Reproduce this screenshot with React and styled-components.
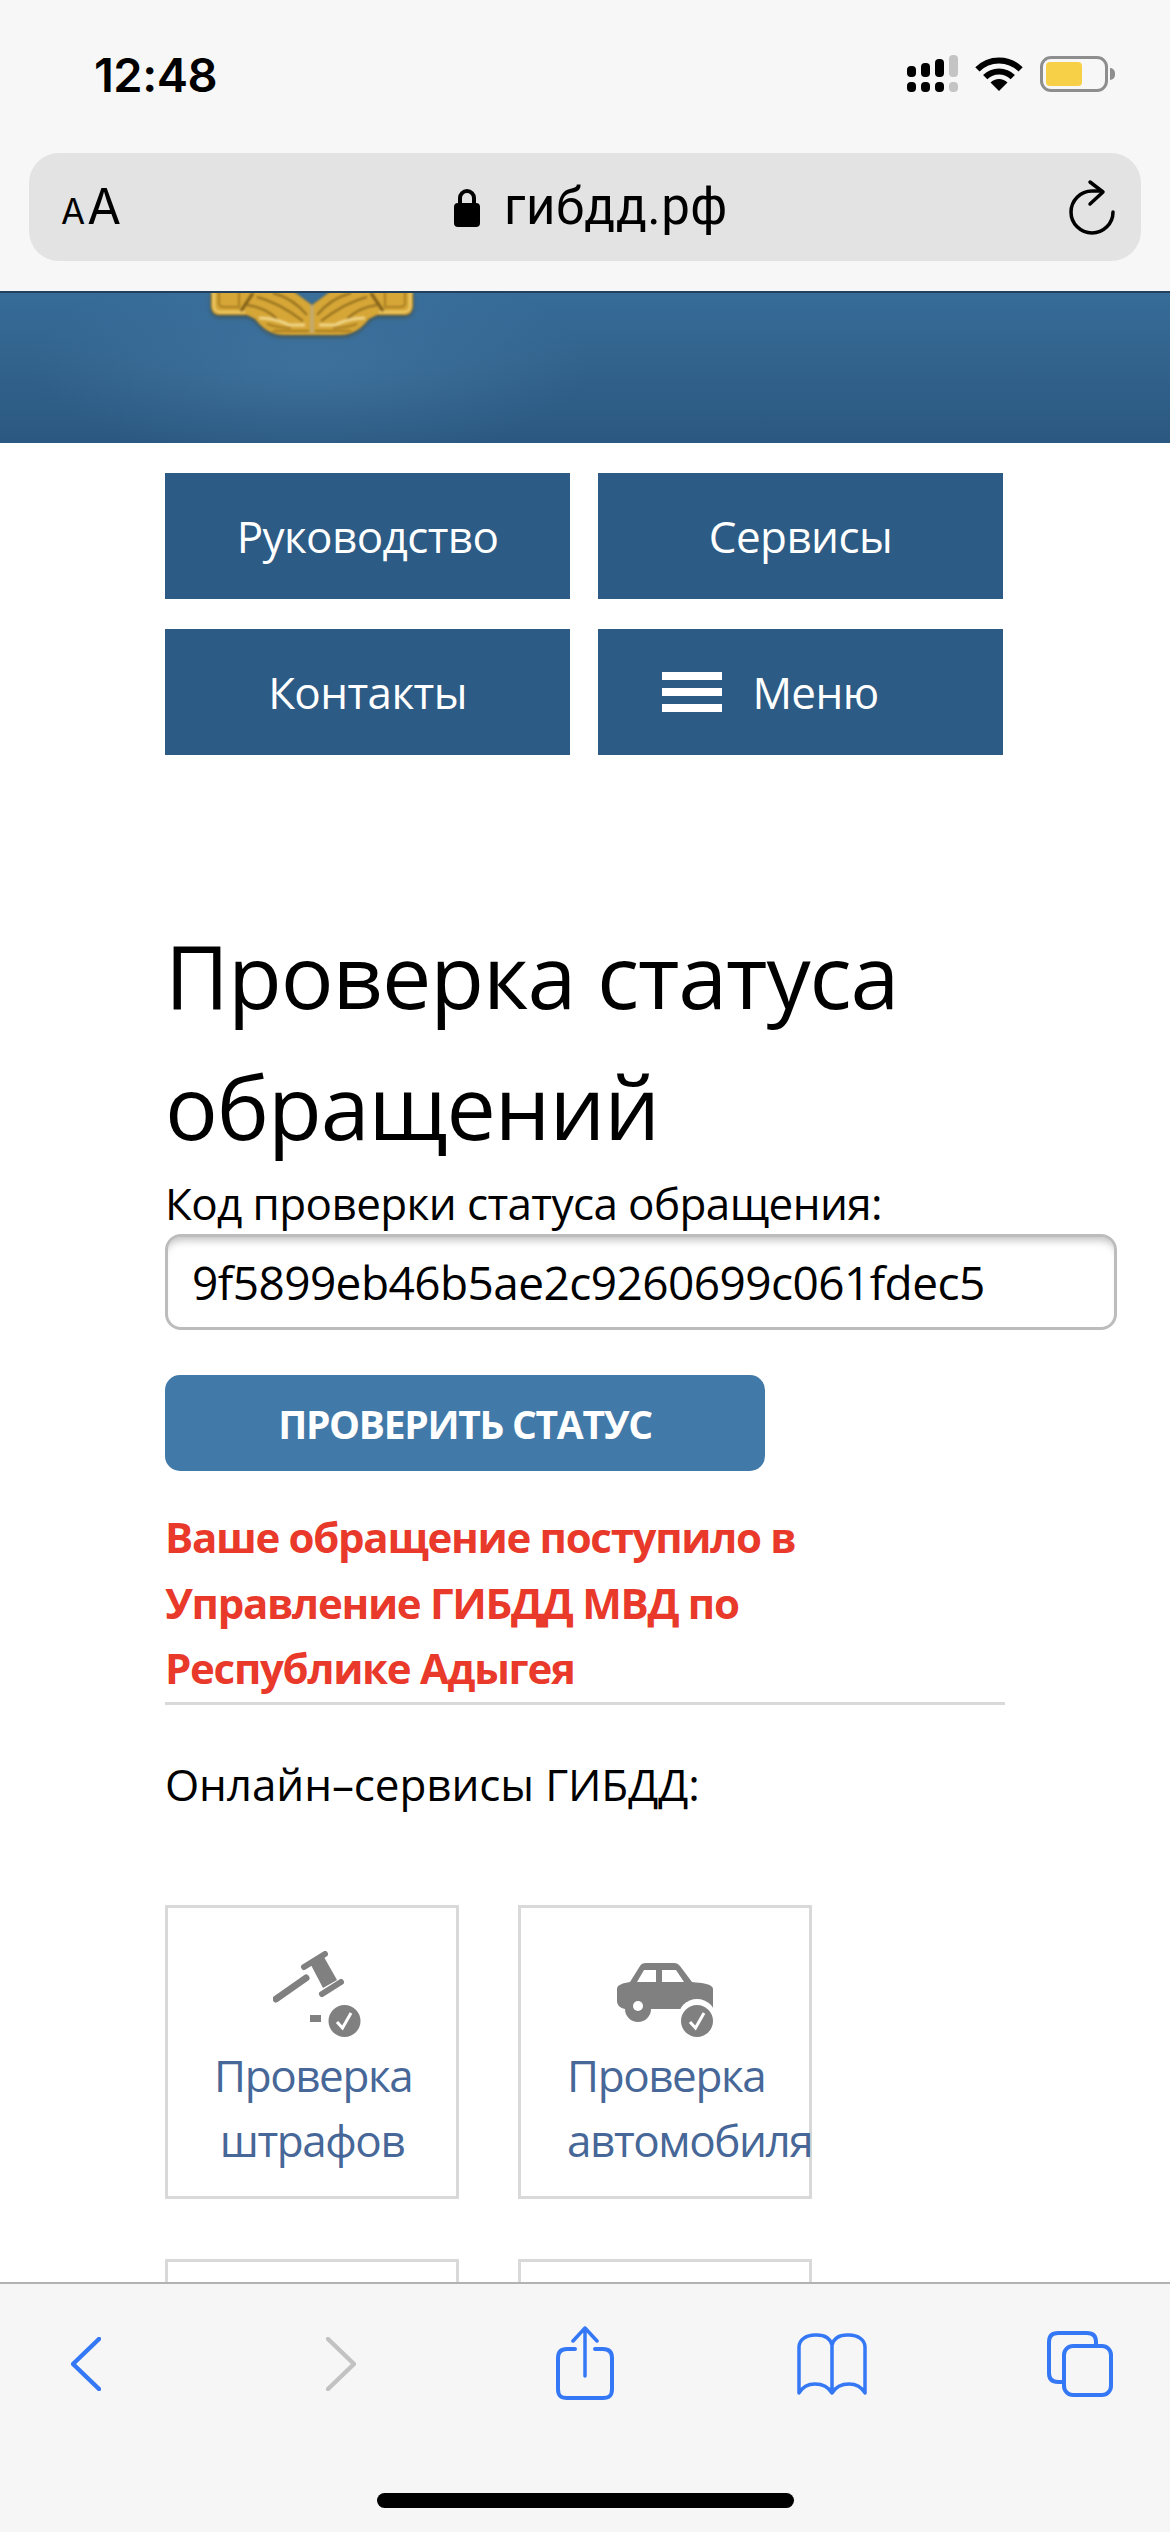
import React from 'react'
import styled, { createGlobalStyle } from 'styled-components'

const GlobalStyle = createGlobalStyle`
  html, body {
    margin: 0;
    padding: 0;
    background: #fff;
  }
  * {
    box-sizing: border-box;
  }
`

const Page = styled.div`
  position: relative;
  width: 1170px;
  height: 2532px;
  overflow: hidden;
  background: #fff;
  color: #000;
  font-family: 'Open Sans', 'Noto Sans', sans-serif;
`

const Chrome = styled.div`
  height: 291px;
  background: #f7f7f7;
  padding: 0 29px;
`

const StatusRow = styled.div`
  height: 153px;
  display: flex;
  align-items: flex-start;
  justify-content: space-between;
  padding: 50px 33px 0 65px;
`

const Clock = styled.div`
  font-family: Inter, sans-serif;
  font-weight: 600;
  font-size: 47px;
  line-height: 50px;
  letter-spacing: -0.5px;
`

const StatusIcons = styled.div`
  display: flex;
  align-items: flex-start;
  margin-top: 5px;
  gap: 17px;
`

const Battery = styled.div`
  position: relative;
  width: 68px;
  height: 36px;
  margin-top: 1px;
  border: 3px solid #8e8e8e;
  border-radius: 11px;
  padding: 3px;
  &::after {
    content: '';
    position: absolute;
    right: -10px;
    top: 9px;
    width: 5px;
    height: 12px;
    background: #8e8e8e;
    border-radius: 0 5px 5px 0;
  }
`

const BatteryLevel = styled.div`
  width: 36px;
  height: 24px;
  background: #f8d048;
  border-radius: 4px;
`

const UrlBar = styled.div`
  position: relative;
  height: 108px;
  background: #e3e3e3;
  border-radius: 30px;
  display: flex;
  align-items: center;
  justify-content: center;
  font-family: Inter, sans-serif;
`

const TextSize = styled.div`
  position: absolute;
  left: 32px;
  top: 26px;
  font-size: 49px;
  line-height: 56px;
  display: flex;
  align-items: baseline;
  gap: 2px;
  small {
    font-size: 35px;
  }
`

const Domain = styled.div`
  display: flex;
  align-items: center;
  gap: 24px;
  margin-left: 12px;
  font-family: Roboto, sans-serif;
  font-size: 51px;
  line-height: 56px;
  letter-spacing: 0.5px;
`

const Reload = styled.svg`
  position: absolute;
  right: 23px;
  top: 26px;
`

const SiteHeader = styled.div`
  position: relative;
  height: 152px;
  overflow: hidden;
  border-top: 2px solid #21405e;
  background:
    radial-gradient(ellipse 280px 100px at 310px 70px, rgba(72, 126, 170, 0.55), rgba(72, 126, 170, 0)),
    linear-gradient(#376c98, #2b5880);
`

const Emblem = styled.svg`
  position: absolute;
  left: 211px;
  top: -2px;
  filter: blur(0.8px) drop-shadow(0 2px 2px rgba(70, 55, 15, 0.55));
`

const Content = styled.div`
  padding: 30px 0 0 165px;
`

const NavGrid = styled.div`
  display: grid;
  grid-template-columns: 405px 405px;
  grid-auto-rows: 126px;
  column-gap: 28px;
  row-gap: 30px;
`

const NavButton = styled.div`
  display: flex;
  align-items: center;
  justify-content: center;
  gap: 30px;
  padding-right: ${({ $withIcon }) => ($withIcon ? 60 : 0)}px;
  background: #2c5b85;
  color: #fff;
  font-size: 44px;
  letter-spacing: -0.6px;
`

const Burger = styled.span`
  display: block;
  width: 60px;
  height: 40px;
  background: linear-gradient(#fff 0 8px, transparent 8px 16px, #fff 16px 24px, transparent 24px 32px, #fff 32px 40px);
`

const Title = styled.h1`
  margin: 155px 0 0;
  font-size: 88px;
  line-height: 131px;
  font-weight: 400;
  width: 900px;
  letter-spacing: -1.1px;
`

const FieldLabel = styled.div`
  font-size: 44px;
  line-height: 62px;
  letter-spacing: -0.6px;
`

const CodeInput = styled.div`
  width: 952px;
  height: 96px;
  border: 3px solid #bcbcbc;
  border-radius: 16px;
  box-shadow: inset 0 9px 8px -6px #bdbdbd;
  padding: 0 24px;
  display: flex;
  align-items: center;
  font-size: 46px;
  letter-spacing: -0.56px;
`

const CheckButton = styled.div`
  width: 600px;
  height: 96px;
  margin-top: 45px;
  background: #417aa9;
  border-radius: 15px;
  color: #fff;
  display: flex;
  align-items: center;
  justify-content: center;
  font-weight: 700;
  font-size: 39px;
  letter-spacing: -1.3px;
`

const Result = styled.div`
  width: 840px;
  margin-top: 33px;
  padding-bottom: 1px;
  border-bottom: 3px solid #d9d9d9;
  color: #e8392a;
  font-weight: 700;
  font-size: 42px;
  line-height: 65.5px;
  letter-spacing: -1.3px;
`

const ServicesLabel = styled.div`
  margin-top: 48px;
  font-size: 44px;
  line-height: 62px;
  letter-spacing: -0.1px;
`

const CardGrid = styled.div`
  display: grid;
  grid-template-columns: 294px 294px;
  grid-auto-rows: 294px;
  column-gap: 59px;
  row-gap: 60px;
  margin-top: 90px;
`

const Card = styled.div`
  border: 3px solid #d9d9d9;
  padding: 39px 46px 0;
  display: flex;
  flex-direction: column;
  align-items: stretch;
`

const CardIcon = styled.div`
  height: 90px;
  display: flex;
  justify-content: center;
  align-items: flex-end;
  svg {
    filter: blur(0.6px);
    margin-left: ${({ $shift }) => $shift || 0}px;
  }
`

const CardText = styled.div`
  color: #466797;
  font-size: 44px;
  line-height: 65.5px;
  letter-spacing: -1.4px;
  text-align: center;
  margin-top: 6px;
`

const Toolbar = styled.div`
  position: absolute;
  left: 0;
  right: 0;
  bottom: 0;
  height: 250px;
  background: #f6f6f6;
  border-top: 2px solid #b2b2b2;
  display: flex;
  flex-direction: column;
`

const ToolRow = styled.div`
  display: grid;
  grid-template-columns: 172px 338px 150px 344px 152px;
  grid-template-rows: 160px;
  justify-items: center;
  align-items: center;
`

const HomeIndicator = styled.div`
  align-self: center;
  width: 417px;
  height: 15px;
  margin-top: 49px;
  background: #000;
  border-radius: 8px;
`

const Signal = () => (
  <svg width="51" height="37" viewBox="0 0 51 37">
    <rect x="0" y="11" width="9" height="11" rx="4" />
    <rect x="14" y="8" width="9" height="14" rx="4" />
    <rect x="28" y="4" width="9" height="18" rx="4" />
    <rect x="42" y="0" width="9" height="22" rx="4" fill="#c4c4c4" />
    <rect x="0" y="27" width="9" height="10" rx="4" />
    <rect x="14" y="27" width="9" height="10" rx="4" />
    <rect x="28" y="27" width="9" height="10" rx="4" />
    <rect x="42" y="27" width="9" height="10" rx="4" fill="#c4c4c4" />
  </svg>
)

const Wifi = () => (
  <svg width="48" height="36" viewBox="0 0 48 36">
    <path d="M2.4 14.4A30.5 30.5 0 0 1 45.6 14.4" fill="none" stroke="#000" strokeWidth="6" />
    <path d="M10.2 22.2A19.5 19.5 0 0 1 37.8 22.2" fill="none" stroke="#000" strokeWidth="6" />
    <path d="M24 36L15.5 27.5A12 12 0 0 1 32.5 27.5Z" />
  </svg>
)

const Lock = () => (
  <svg width="26" height="39" viewBox="0 0 26 39">
    <path d="M6 18V10a7 7 0 0 1 14 0v8" fill="none" stroke="#000" strokeWidth="4" />
    <rect x="0" y="15" width="26" height="24" rx="4" />
  </svg>
)

const WreathSide = () => (
  <g>
    <path d="M0 0H82L101 14V44H74C60 44 52 38 44 28L36 24H8C3 24 0 20 0 14Z" fill="#d6a636" />
    <path d="M3 0V15C3 19 6 21 10 21H34" fill="none" stroke="#f0cf70" strokeWidth="2" />
    <path d="M8 0V12C8 15 10 16 13 16H28V0" fill="none" stroke="#a97f22" strokeWidth="2" />
    <path d="M30 20L42 2" stroke="#7d5c17" strokeWidth="3" />
    <path d="M36 14C50 16 60 22 66 28M46 6C62 10 76 18 92 30M62 2C76 6 88 14 96 24" fill="none" stroke="#8f6c1d" strokeWidth="2" />
    <path d="M48 27C60 27 70 30 78 34H94" fill="none" stroke="#f0d68a" strokeWidth="3" />
    <path d="M62 40H98M56 33C64 36 72 37 80 37" fill="none" stroke="#a67c20" strokeWidth="2" />
  </g>
)

const Gavel = () => (
  <svg width="88" height="86" viewBox="0 0 88 86" fill="#808080">
    <path d="M3 48L33 27" stroke="#808080" strokeWidth="7" strokeLinecap="round" />
    <path d="M38 14L51 6L64 29L50 37Z" />
    <path d="M31 16L52 3" stroke="#808080" strokeWidth="6" strokeLinecap="round" />
    <path d="M49 43L68 31" stroke="#808080" strokeWidth="6" strokeLinecap="round" />
    <rect x="37" y="64" width="11" height="7" />
    <circle cx="71.5" cy="70" r="16" />
    <path d="M64 71L69.5 77L78 62" fill="none" stroke="#fff" strokeWidth="3" />
  </svg>
)

const Car = () => (
  <svg width="96" height="74" viewBox="0 0 96 74" fill="#808080">
    <path d="M0 26C0 22 6 20 13 19L23 3C24 1 26 0 29 0H57C60 0 61 1 63 3L75 19C85 20 96 21 96 26V46H34A13 13 0 0 1 8 46C3 45 0 42 0 38Z" />
    <path d="M27 7H39V19H20Z" fill="#fff" />
    <path d="M45 7H59L67 19H45Z" fill="#fff" />
    <circle cx="21" cy="43" r="11" />
    <circle cx="21" cy="43" r="5" fill="#fff" />
    <circle cx="80" cy="55" r="19" fill="#fff" />
    <circle cx="80" cy="58" r="16" />
    <path d="M73 59L78.5 65L87 50" fill="none" stroke="#fff" strokeWidth="3" />
  </svg>
)

const toolStroke = { fill: 'none', stroke: '#3478f6', strokeWidth: 4, strokeLinecap: 'round', strokeLinejoin: 'round' }

const ToolbarIcons = () => (
  <ToolRow>
    <svg width="30" height="54" viewBox="0 0 30 54">
      <path d="M28 2L2 27L28 52" {...toolStroke} strokeWidth="4.5" />
    </svg>
    <svg width="30" height="54" viewBox="0 0 30 54">
      <path d="M2 2L28 27L2 52" {...toolStroke} stroke="#c2c2c2" strokeWidth="4.5" />
    </svg>
    <svg width="58" height="76" viewBox="0 0 58 76">
      <path d="M19 23H11C5 23 2 26 2 32V63C2 70 5 72 11 72H47C53 72 56 70 56 63V32C56 26 53 23 47 23H39" {...toolStroke} />
      <path d="M29 50V2M17 15L29 2L41 15" {...toolStroke} strokeWidth="3.5" />
    </svg>
    <svg width="70" height="62" viewBox="0 0 70 62">
      <path d="M35 12C33 5 27 2 20 2H18C9 2 2 7 2 14V60C6 53 12 51 18 51C26 51 32 55 35 60C38 55 44 51 52 51C58 51 64 53 68 60V14C68 7 61 2 52 2H50C43 2 37 5 35 12V60" {...toolStroke} strokeWidth="3.5" />
    </svg>
    <svg width="66" height="66" viewBox="0 0 66 66">
      <path d="M16 51H11C5 51 2 48 2 42V11C2 5 5 2 11 2H40C46 2 49 5 49 11V15" {...toolStroke} />
      <rect x="17" y="15" width="47" height="49" rx="9" {...toolStroke} />
    </svg>
  </ToolRow>
)

const App = () => (
  <Page>
    <GlobalStyle />
    <Chrome>
      <StatusRow>
        <Clock>12:48</Clock>
        <StatusIcons>
          <Signal />
          <Wifi />
          <Battery>
            <BatteryLevel />
          </Battery>
        </StatusIcons>
      </StatusRow>
      <UrlBar>
        <TextSize>
          <small>A</small>A
        </TextSize>
        <Domain>
          <Lock />
          гибдд.рф
        </Domain>
        <Reload width="50" height="56" viewBox="0 0 50 56">
          <path d="M45 33A21 21 0 1 1 24 12H33" fill="none" stroke="#000" strokeWidth="3.5" strokeLinecap="round" />
          <path d="M22 3L35 13L22 25" fill="none" stroke="#000" strokeWidth="3.5" strokeLinecap="round" strokeLinejoin="round" />
        </Reload>
      </UrlBar>
    </Chrome>

    <SiteHeader>
      <Emblem width="202" height="50" viewBox="0 0 202 50">
        <WreathSide />
        <g transform="matrix(-1 0 0 1 202 0)">
          <WreathSide />
        </g>
        <rect x="99" y="14" width="4" height="28" fill="#c4a96a" />
      </Emblem>
    </SiteHeader>

    <Content>
      <NavGrid>
        <NavButton>Руководство</NavButton>
        <NavButton>Сервисы</NavButton>
        <NavButton>Контакты</NavButton>
        <NavButton $withIcon>
          <Burger />
          Меню
        </NavButton>
      </NavGrid>

      <Title>Проверка статуса обращений</Title>
      <FieldLabel>Код проверки статуса обращения:</FieldLabel>
      <CodeInput>9f5899eb46b5ae2c9260699c061fdec5</CodeInput>
      <CheckButton>ПРОВЕРИТЬ СТАТУС</CheckButton>
      <Result>
        Ваше обращение поступило в
        <br />
        Управление ГИБДД МВД по
        <br />
        Республике Адыгея
      </Result>
      <ServicesLabel>Онлайн–сервисы ГИБДД:</ServicesLabel>

      <CardGrid>
        <Card>
          <CardIcon $shift={10}>
            <Gavel />
          </CardIcon>
          <CardText>Проверка штрафов</CardText>
        </Card>
        <Card>
          <CardIcon>
            <Car />
          </CardIcon>
          <CardText>Проверка автомобиля</CardText>
        </Card>
        <Card />
        <Card />
      </CardGrid>
    </Content>

    <Toolbar>
      <ToolbarIcons />
      <HomeIndicator />
    </Toolbar>
  </Page>
)

export default App
